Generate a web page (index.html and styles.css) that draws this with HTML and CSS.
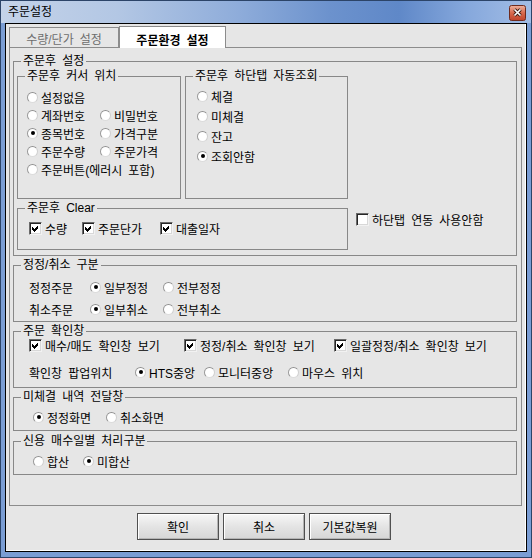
FILE: index.html
```html
<!DOCTYPE html>
<html lang="ko">
<head>
    <meta charset="UTF-8">
    <title>주문설정</title>
    <link rel="stylesheet" href="styles.css">
</head>
<body>
    <div class="window">
        <div class="titlebar">
            <span class="title">주문설정</span>
            <span class="close">
                <svg width="17" height="16" viewBox="0 0 17 16">
                    <defs>
                        <linearGradient id="cg" x1="0" y1="0" x2="0" y2="1">
                            <stop offset="0" stop-color="#eeb3a0"/>
                            <stop offset="0.5" stop-color="#d7694c"/>
                            <stop offset="1" stop-color="#c0432a"/>
                        </linearGradient>
                    </defs>
                    <rect x="0.5" y="0.5" width="16" height="15" rx="2" fill="url(#cg)" stroke="#6e2a1d"/>
                    <path d="M5.5 4.5 L11.5 10.5 M11.5 4.5 L5.5 10.5" stroke="#3a1a12" stroke-width="3.4"/>
                    <path d="M5.5 4.5 L11.5 10.5 M11.5 4.5 L5.5 10.5" stroke="#fff" stroke-width="1.6"/>
                </svg>
            </span>
        </div>
        <div class="frame">
            <div class="client">
                <div class="tabs">
                    <div class="tab">수량/단가 설정</div>
                    <div class="tab active">주문환경 설정</div>
                </div>
                <div class="panel">
                    <!-- 주문후 설정 -->
                    <fieldset class="group after">
                        <legend>주문후 설정</legend>
                        <div class="after-top">
                            <fieldset class="group cursor">
                                <legend>주문후 커서 위치</legend>
                                <div class="cursor-body">
                                    <label class="opt wide"><span class="radio"></span>설정없음</label>
                                    <label class="opt"><span class="radio"></span>계좌번호</label>
                                    <label class="opt"><span class="radio"></span>비밀번호</label>
                                    <label class="opt"><span class="radio on"></span>종목번호</label>
                                    <label class="opt"><span class="radio"></span>가격구분</label>
                                    <label class="opt"><span class="radio"></span>주문수량</label>
                                    <label class="opt"><span class="radio"></span>주문가격</label>
                                    <label class="opt wide"><span class="radio"></span>주문버튼(에러시 포함)</label>
                                </div>
                            </fieldset>
                            <fieldset class="group lookup">
                                <legend>주문후 하단탭 자동조회</legend>
                                <div class="lookup-body">
                                    <label class="opt"><span class="radio"></span>체결</label>
                                    <label class="opt"><span class="radio"></span>미체결</label>
                                    <label class="opt"><span class="radio"></span>잔고</label>
                                    <label class="opt"><span class="radio on"></span>조회안함</label>
                                </div>
                            </fieldset>
                        </div>
                        <div class="after-bottom">
                            <fieldset class="group clear">
                                <legend>주문후 Clear</legend>
                                <div class="clear-body">
                                    <label class="opt w53"><span class="check on"><svg width="11" height="11" viewBox="0 0 11 11"><path d="M2 4 L4 6 L8 2 L8 5 L4 9 L2 7 Z"/></svg></span>수량</label>
                                    <label class="opt w78"><span class="check on"><svg width="11" height="11" viewBox="0 0 11 11"><path d="M2 4 L4 6 L8 2 L8 5 L4 9 L2 7 Z"/></svg></span>주문단가</label>
                                    <label class="opt"><span class="check on"><svg width="11" height="11" viewBox="0 0 11 11"><path d="M2 4 L4 6 L8 2 L8 5 L4 9 L2 7 Z"/></svg></span>대출일자</label>
                                </div>
                            </fieldset>
                            <label class="opt solo"><span class="check"></span>하단탭 연동 사용안함</label>
                        </div>
                    </fieldset>

                    <!-- 정정/취소 구분 -->
                    <fieldset class="group modify">
                        <legend>정정/취소 구분</legend>
                        <div class="modify-body">
                            <span class="caption">정정주문</span>
                            <label class="opt"><span class="radio on"></span>일부정정</label>
                            <label class="opt"><span class="radio"></span>전부정정</label>
                            <span class="caption">취소주문</span>
                            <label class="opt"><span class="radio on"></span>일부취소</label>
                            <label class="opt"><span class="radio"></span>전부취소</label>
                        </div>
                    </fieldset>

                    <!-- 주문 확인창 -->
                    <fieldset class="group confirm">
                        <legend>주문 확인창</legend>
                        <div class="confirm-body">
                            <div class="confirm-row">
                                <label class="opt w155"><span class="check on"><svg width="11" height="11" viewBox="0 0 11 11"><path d="M2 4 L4 6 L8 2 L8 5 L4 9 L2 7 Z"/></svg></span>매수/매도 확인창 보기</label>
                                <label class="opt w150"><span class="check on"><svg width="11" height="11" viewBox="0 0 11 11"><path d="M2 4 L4 6 L8 2 L8 5 L4 9 L2 7 Z"/></svg></span>정정/취소 확인창 보기</label>
                                <label class="opt"><span class="check on"><svg width="11" height="11" viewBox="0 0 11 11"><path d="M2 4 L4 6 L8 2 L8 5 L4 9 L2 7 Z"/></svg></span>일괄정정/취소 확인창 보기</label>
                            </div>
                            <div class="popup-row">
                                <span class="caption w106">확인창 팝업위치</span>
                                <label class="opt w69"><span class="radio on"></span>HTS중앙</label>
                                <label class="opt w84"><span class="radio"></span>모니터중앙</label>
                                <label class="opt"><span class="radio"></span>마우스 위치</label>
                            </div>
                        </div>
                    </fieldset>

                    <!-- 미체결 내역 전달창 -->
                    <fieldset class="group small">
                        <legend>미체결 내역 전달창</legend>
                        <div class="small-body">
                            <label class="opt w73"><span class="radio on"></span>정정화면</label>
                            <label class="opt"><span class="radio"></span>취소화면</label>
                        </div>
                    </fieldset>

                    <!-- 신용 매수일별 처리구분 -->
                    <fieldset class="group small credit">
                        <legend>신용 매수일별 처리구분</legend>
                        <div class="small-body">
                            <label class="opt w50"><span class="radio"></span>합산</label>
                            <label class="opt"><span class="radio on"></span>미합산</label>
                        </div>
                    </fieldset>
                </div>
                <div class="buttons">
                    <button class="btn">확인</button>
                    <button class="btn">취소</button>
                    <button class="btn">기본값복원</button>
                </div>
            </div>
        </div>
    </div>
</body>
</html>
```

FILE: styles.css
```css
* {
    margin: 0;
    padding: 0;
    box-sizing: border-box;
}
body {
    font-family: "Liberation Sans", "Noto Sans CJK KR", sans-serif;
    font-size: 12px;
    word-spacing: 2.7px;
    color: #000;
    background: #fff;
}

/* window frame */
.window {
    width: 532px;
    height: 558px;
    border: 1px solid #2c4468;
    background: #7a9dd4;
    display: flex;
    flex-direction: column;
}
.titlebar {
    height: 22px;
    flex: none;
    display: flex;
    justify-content: space-between;
    padding: 0 5px 0 7px;
    background: linear-gradient(to right, #c4d3e9 0%, #b3c7e4 22%, #8eacda 45%, #6c92cd 62%, #5f88c8 75%, #86a8dc 88%, #a2bde5 100%);
}
.title {
    line-height: 22px;
}
.close {
    margin-top: 4px;
    height: 16px;
}
.close svg {
    display: block;
}
.frame {
    flex: 1;
    padding: 0 4px 5px 4px;
}
.client {
    height: 100%;
    border: 1px solid #000;
    background: #e6e6e6;
    box-shadow: inset -1px -1px 0 #fff;
}

/* tabs */
.tabs {
    display: flex;
    align-items: flex-end;
    height: 23px;
    padding-left: 3px;
}
.tab {
    width: 110px;
    height: 20px;
    border: 1px solid #8c8c8c;
    border-bottom: none;
    color: #6e6e6e;
    display: flex;
    justify-content: center;
    align-items: center;
    padding-top: 2px;
}
.tab.active {
    width: 107px;
    height: 22px;
    margin-bottom: -1px;
    position: relative;
    z-index: 1;
    background: #fff;
    color: #000;
    font-weight: bold;
    padding-top: 3px;
}
.panel {
    margin-left: 3px;
    width: 513px;
    height: 459px;
    border: 1px solid #8c8c8c;
    padding: 7px 4px 0 3px;
}

/* group boxes */
.group {
    border: 1px solid #888;
    min-width: 0;
}
.group legend {
    margin-left: 7px;
    padding: 0 2px;
    line-height: 13px;
    height: 13px;
}
.after {
    height: 201px;
}
.after-top {
    display: flex;
    margin-top: 2px;
    padding-left: 3px;
}
.cursor {
    width: 164px;
    height: 129px;
}
.lookup {
    width: 163px;
    height: 129px;
    margin-left: 4px;
}
.cursor-body {
    padding: 5px 0 0 9px;
    display: grid;
    grid-template-columns: 73px auto;
    grid-auto-rows: 18px;
}
.cursor-body .wide {
    grid-column: 1 / 3;
}
.lookup-body {
    padding: 4px 0 0 11px;
    display: grid;
    grid-auto-rows: 20px;
}
.after-bottom {
    display: flex;
    align-items: flex-start;
    margin-top: 3px;
    padding-left: 3px;
}
.clear {
    width: 331px;
    height: 48px;
}
.clear-body {
    display: flex;
    padding: 7px 0 0 11px;
}
.clear-body .opt {
    height: 13px;
}
.solo {
    margin: 8px 0 0 8px;
    height: 13px;
}

.modify,
.confirm {
    height: 63px;
    margin-top: 3px;
}
.modify-body {
    display: grid;
    grid-template-columns: 61px 73px auto;
    grid-auto-rows: 18px;
    row-gap: 4px;
    padding: 6px 0 0 15px;
}
.caption {
    display: flex;
    align-items: center;
}
.confirm-body {
    padding: 1px 0 0 15px;
}
.confirm-row {
    display: flex;
    height: 13px;
}
.confirm-row .opt {
    height: 13px;
}
.popup-row {
    display: flex;
    height: 18px;
    margin-top: 11px;
}
.small {
    height: 40px;
    margin-top: 3px;
}
.small.credit {
    margin-top: 4px;
}
.small-body {
    display: flex;
    padding: 4px 0 0 19px;
}

/* options */
.opt {
    display: flex;
    align-items: center;
    gap: 3px;
    height: 18px;
    white-space: nowrap;
}
.w50 { width: 50px; }
.w53 { width: 53px; }
.w69 { width: 69px; }
.w73 { width: 73px; }
.w78 { width: 78px; }
.w84 { width: 84px; }
.w106 { width: 106px; }
.w150 { width: 150px; }
.w155 { width: 155px; }

.radio {
    flex: none;
    width: 11px;
    height: 11px;
    border-radius: 50%;
    border: 1px solid;
    border-color: #8f8f8f #cfcfcf #dcdcdc #9a9a9a;
    background: #fff;
    display: flex;
    justify-content: center;
    align-items: center;
}
.radio.on::after {
    content: "";
    width: 4px;
    height: 4px;
    border-radius: 50%;
    background: #000;
}
.check {
    flex: none;
    width: 13px;
    height: 13px;
    border: 1px solid;
    border-color: #6a6a6a #f2f2f2 #f2f2f2 #6a6a6a;
    box-shadow: inset 1px 1px 0 #262626, inset -1px -1px 0 #d8d8d8;
    background: #fff;
}
.check svg {
    display: block;
    fill: #000;
    shape-rendering: crispEdges;
}

/* buttons */
.buttons {
    display: flex;
    gap: 4px;
    padding-left: 131px;
    margin-top: 7px;
}
.btn {
    width: 82px;
    height: 27px;
    font-family: inherit;
    font-size: 12px;
    word-spacing: inherit;
    color: #000;
    border: 1px solid #505050;
    background: linear-gradient(#f7f7f7, #e4e4e4 50%, #d6d6d6);
    box-shadow: inset 1px 1px 0 #fff, inset -1px -1px 0 #b4b4b4;
}
```
